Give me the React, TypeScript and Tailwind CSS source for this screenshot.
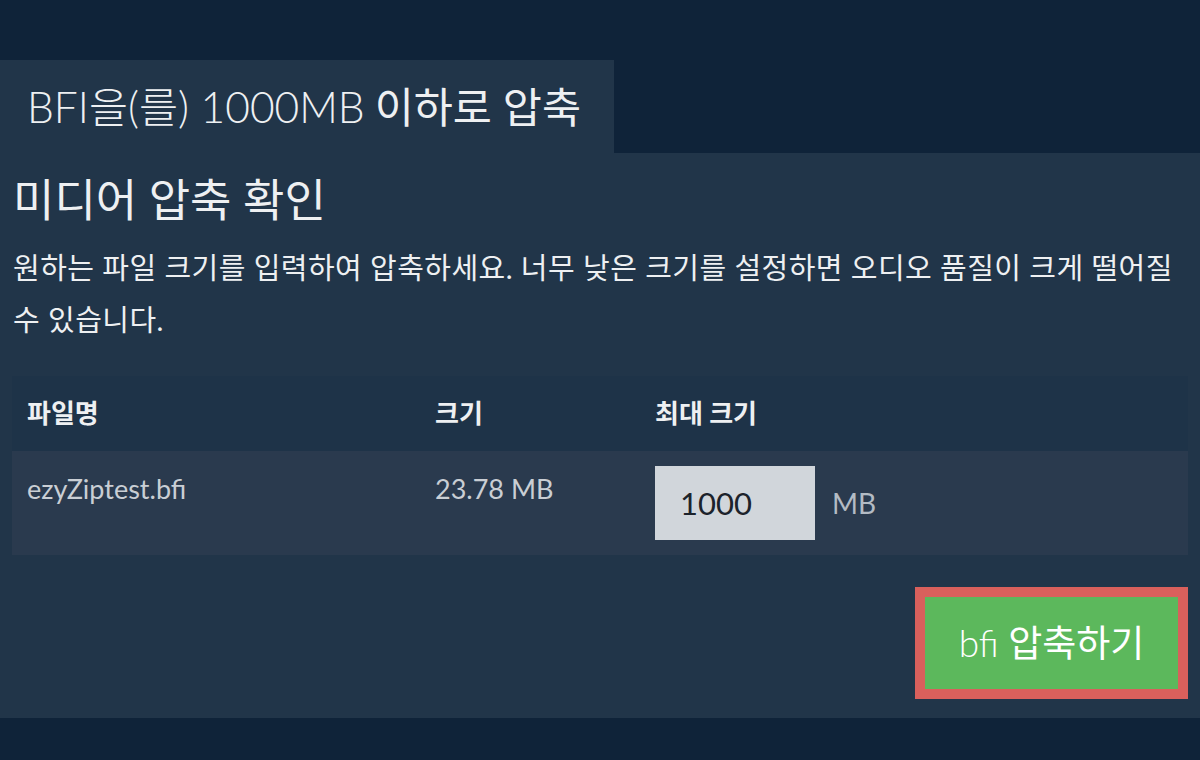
export default function App() {
  const font = { fontFamily: "Lato, 'Noto Sans CJK KR', sans-serif" };

  return (
    <div className="w-full h-[760px] bg-[#0f2339] pt-[60px]" style={font}>
      {/* tab */}
      <div className="w-[614px] h-[93px] bg-[#213549] flex items-center pl-[27px] text-[42.5px] text-[#eef0f2]">
        <span className="font-light">BFI을(를) 1000MB</span>
        <span className="ml-[10px]">이하로 압축</span>
      </div>

      {/* panel */}
      <div className="h-[565px] bg-[#213549] px-[12px] pt-[20px]">
        <h1 className="text-[45px] leading-[54px] text-[#eef0f2] pl-[1px]">미디어 압축 확인</h1>
        <p className="mt-[15px] text-[29px] leading-[52px] text-[#eef0f2] pl-[1px] tracking-[0.45px] break-keep">
          원하는 파일 크기를 입력하여 압축하세요. 너무 낮은 크기를 설정하면 오디오 품질이 크게 떨어질 수 있습니다.
        </p>

        <table className="mt-[30px] w-full border-collapse text-left">
          <thead>
            <tr className="bg-[#1e3348] h-[75px]">
              <th className="w-[408px] px-[15px] text-[26px] font-bold text-[#eef0f2]">파일명</th>
              <th className="w-[220px] px-[15px] text-[26px] font-bold text-[#eef0f2]">크기</th>
              <th className="px-[15px] text-[26px] font-bold text-[#eef0f2]">최대 크기</th>
            </tr>
          </thead>
          <tbody>
            <tr className="bg-[#2a3a4e]">
              <td className="align-top px-[15px] py-[15px] text-[27px] leading-[46px] text-[#c9ced4]">
                ezyZiptest.bfi
              </td>
              <td className="align-top px-[15px] py-[15px] text-[27px] leading-[46px] text-[#c9ced4]">
                23.78 MB
              </td>
              <td className="align-top px-[15px] py-[15px]">
                <div className="flex items-center gap-[17px]">
                  <input
                    defaultValue="1000"
                    className="w-[160px] h-[74px] bg-[#d1d6db] pl-[25px] text-[31px] text-[#1c232b] outline-none"
                  />
                  <span className="text-[28px] text-[#b3bbc4]">MB</span>
                </div>
              </td>
            </tr>
          </tbody>
        </table>

        <div className="flex justify-end mt-[32px]">
          <button className="w-[273px] h-[112px] border-[10px] border-[#d9605c] bg-[#5cb85c] text-white text-[37px]">
            <span className="font-light">bfi</span> 압축하기
          </button>
        </div>
      </div>
    </div>
  );
}
